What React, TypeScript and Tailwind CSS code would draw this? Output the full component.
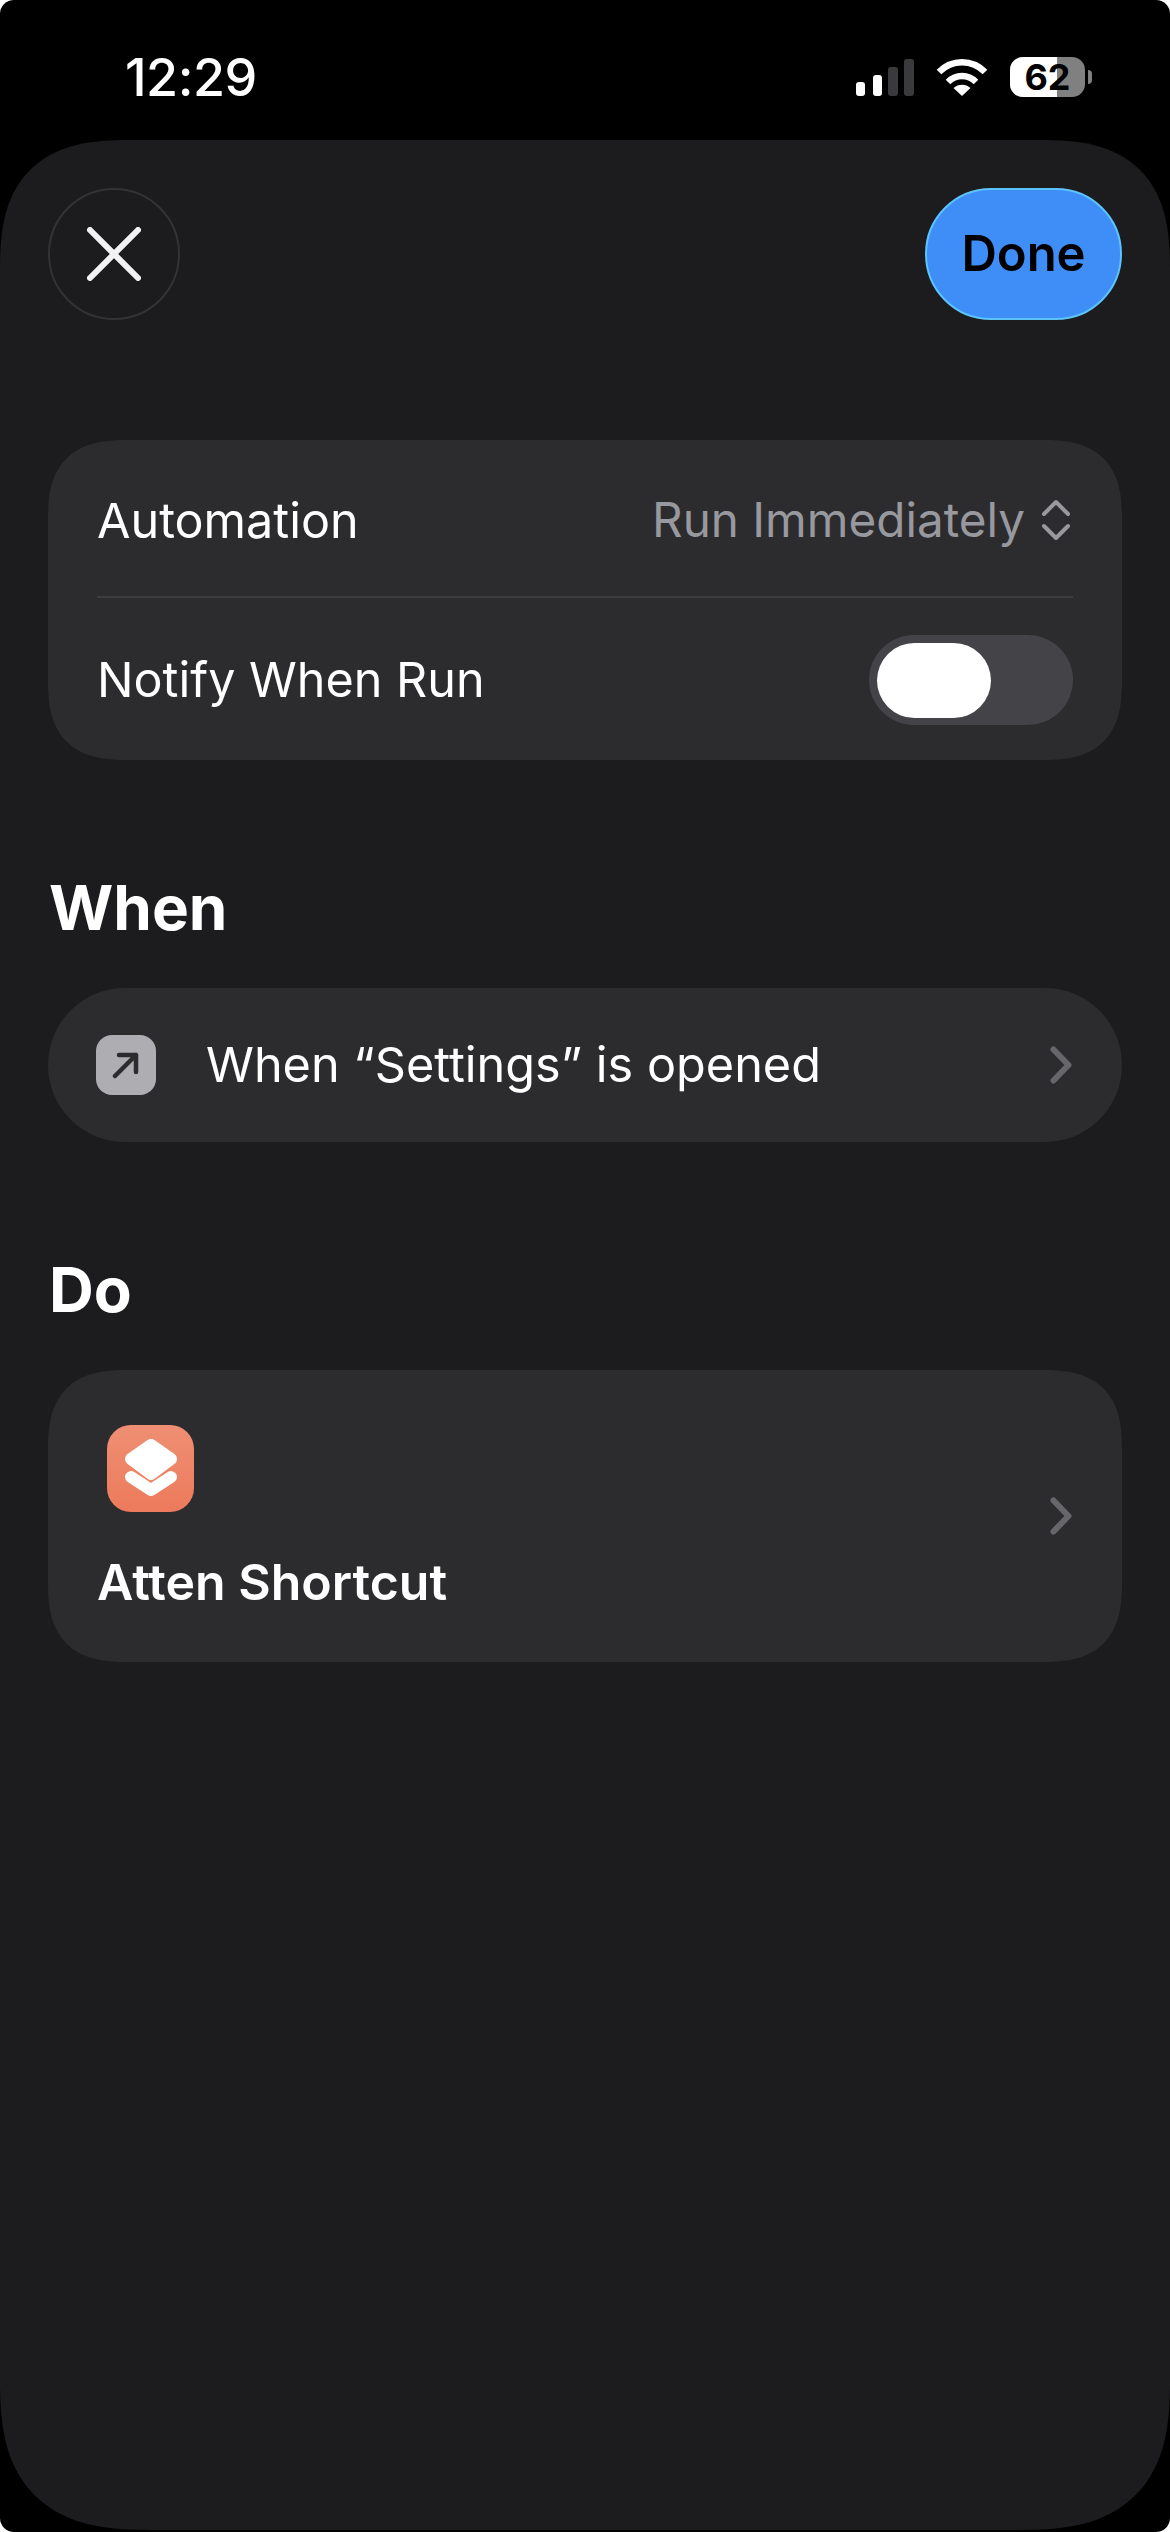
const font = { fontFamily: "Inter, 'Liberation Sans', sans-serif" }

const Chevron = () => (
  <svg width="22" height="38" viewBox="0 0 22 38" fill="none" stroke="#67676b" strokeWidth="6" strokeLinecap="round" strokeLinejoin="round">
    <path d="M3.5 3.5 L18.5 19 L3.5 34.5" />
  </svg>
)

const StatusBar = () => (
  <div className="flex h-[140px] items-start justify-between pl-[125px] pr-[78px] text-white">
    <span className="mt-[50px] text-[52px] leading-[56px] font-medium tracking-[-0.5px]">12:29</span>
    <div className="mt-[57px] flex items-start">
      <svg width="58" height="40" viewBox="0 0 58 40" fill="white">
        <rect x="0" y="25" width="9" height="14" rx="3" />
        <rect x="17" y="18" width="9" height="21" rx="3" />
        <rect x="32" y="10" width="10" height="29" rx="3" fill="#3a3a3c" />
        <rect x="48" y="2" width="10" height="37" rx="3" fill="#3a3a3c" />
      </svg>
      <svg className="ml-[22px] mt-[1px]" width="52" height="39" viewBox="0 0 52 39" fill="none" stroke="white" strokeWidth="6.5">
        <path d="M3 14 C16 1 36 1 49 14" />
        <path d="M12 24 C20 16 32 16 40 24" />
        <path d="M26 38 L17.5 30 C22 25.5 30 25.5 34.5 30 Z" fill="white" stroke="none" />
      </svg>
      <div className="ml-[22px] flex items-center">
        <div className="relative flex h-[40px] w-[75px] items-center justify-center rounded-[13px] bg-[#808080]">
          <div className="absolute inset-y-0 left-0 w-[47px] rounded-l-[13px] bg-white" />
          <span className="relative text-[36px] leading-none font-bold text-black">62</span>
        </div>
        <div className="ml-[3px] h-[14px] w-[4px] rounded-r-full bg-[#808080]" />
      </div>
    </div>
  </div>
)

const Header = () => (
  <div className="flex items-center justify-between px-[48px] pt-[48px]">
    <div className="flex size-[132px] items-center justify-center rounded-full border-2 border-[#333335]">
      <svg width="54" height="54" viewBox="0 0 54 54" fill="none" stroke="#f2f2f4" strokeWidth="6" strokeLinecap="round">
        <path d="M3 3 L51 51 M51 3 L3 51" />
      </svg>
    </div>
    <div className="flex h-[132px] w-[197px] items-center justify-center rounded-full border-2 border-[#5cc4fb] bg-[#3f8ef8] text-[49px] font-semibold text-black">
      Done
    </div>
  </div>
)

export default function App() {
  return (
    <div className="h-[2532px] w-[1170px] overflow-hidden bg-white" style={font}>
      <div className="h-full overflow-hidden rounded-[14px] bg-black">
        <StatusBar />
        <div className="h-[2390px] rounded-t-[130px] rounded-b-[150px] bg-[#1c1c1e] [corner-shape:superellipse(1.4)]">
          <Header />

          <div className="mx-[48px] mt-[120px] h-[320px] rounded-[80px] bg-[#2c2c2e] px-[49px] [corner-shape:superellipse(1.4)]">
            <div className="flex h-[158px] items-center justify-between border-b-2 border-[#3d3d40] pt-[4px]">
              <span className="pt-[2px] text-[48.5px] text-white">Automation</span>
              <div className="flex items-center gap-[16px] text-[#98989f]">
                <span className="text-[47.6px]">Run Immediately</span>
                <svg className="mr-[2px]" width="30" height="42" viewBox="0 0 30 42" fill="none" stroke="#98989f" strokeWidth="4" strokeLinecap="round" strokeLinejoin="round">
                  <path d="M3 15 L15 3 L27 15 M3 27 L15 39 L27 27" />
                </svg>
              </div>
            </div>
            <div className="flex h-[160px] items-center justify-between pt-[4px]">
              <span className="text-[48.5px] text-white">Notify When Run</span>
              <div className="flex h-[90px] w-[204px] items-center rounded-full bg-[#444448] pl-[8px]">
                <div className="h-[75px] w-[114px] rounded-full bg-white" />
              </div>
            </div>
          </div>

          <h2 className="mx-[49px] mt-[112px] text-[62px] leading-[72px] font-bold text-white">When</h2>
          <div className="mx-[48px] mt-[44px] flex h-[154px] items-center justify-between rounded-[77px] bg-[#2c2c2e] pl-[48px] pr-[50px]">
            <div className="flex items-center gap-[50px]">
              <div className="flex size-[60px] items-center justify-center rounded-[16px] bg-[#aeaeb2]">
                <svg width="28" height="28" viewBox="0 0 28 28" fill="none" stroke="#2c2c2e" strokeWidth="4.5" strokeLinecap="round" strokeLinejoin="round">
                  <path d="M3 25 L24 4 M7 4 L24 4 L24 21" />
                </svg>
              </div>
              <span className="text-[48.6px] text-white">When “Settings” is opened</span>
            </div>
            <Chevron />
          </div>

          <h2 className="mx-[49px] mt-[112px] text-[62px] leading-[72px] font-bold text-white">Do</h2>
          <div className="mx-[48px] mt-[44px] flex h-[292px] items-center justify-between rounded-[80px] bg-[#2c2c2e] pl-[49px] pr-[50px] [corner-shape:superellipse(1.4)]">
            <div className="mt-[4px]">
              <div className="ml-[10px] flex size-[87px] items-center justify-center rounded-[24px] bg-gradient-to-b from-[#ef8f73] to-[#ec7a5b]">
                <svg width="52" height="58" viewBox="0 0 52 58" fill="white" stroke="white" strokeWidth="12" strokeLinecap="round" strokeLinejoin="round">
                  <path d="M26 6 L46 20 L26 35 L6 20 Z" />
                  <path d="M6 38 L26 51 L46 38" fill="none" />
                </svg>
              </div>
              <div className="mt-[40px] text-[50px] leading-[60px] font-semibold text-white">Atten Shortcut</div>
            </div>
            <Chevron />
          </div>
        </div>
      </div>
    </div>
  )
}
